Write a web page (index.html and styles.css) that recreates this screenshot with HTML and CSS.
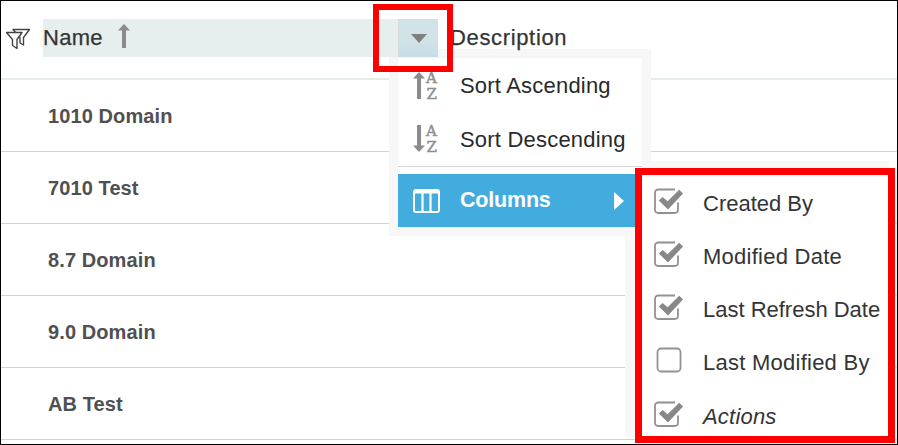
FILE: index.html
```
<!DOCTYPE html>
<html lang="en">
<head>
<meta charset="utf-8">
<title>Domains</title>
<link rel="stylesheet" href="styles.css">
</head>
<body>
<svg class="defs" aria-hidden="true">
  <symbol id="checked" viewBox="0 0 30 26">
    <path d="M22 1.500H5.500Q2 1.500 2 5V21.500Q2 25 5.500 25H21.500Q25 25 25 21.500V14.500" fill="none" stroke="#929295" stroke-width="1.800"/>
    <path d="M5.800 12.500L9.600 9L14.600 13.300L26.200 1.800L30 5.500L15 21.500Z" fill="#88888b"/>
  </symbol>
</svg>
<main class="frame">
  <div class="grid">
    <header class="head">
      <svg class="funnel" viewBox="0 0 26 23" width="26" height="23" fill="#fff" stroke="#444" stroke-width="1.400" stroke-linejoin="round">
        <path d="M8 1.500H24.500L18.500 9.500V17L15 15V9.500Z"/>
        <path d="M1.500 4.500H17L12 11.500V20.500L7.500 17.500V11.500Z"/>
      </svg>
      <div class="name"><span>Name</span>
        <svg viewBox="0 0 12 25" width="12" height="25"><path d="M6 0L12 6.500H8V24H4V6.500H0Z" fill="#8b8b8b"/></svg>
      </div>
      <div class="trigger"><svg viewBox="0 0 16 9" width="16" height="9"><path d="M0 0H16L8 9Z" fill="#7f7f80"/></svg></div>
      <div class="description">Description</div>
    </header>
    <div class="row">1010 Domain</div>
    <div class="row">7010 Test</div>
    <div class="row">8.7 Domain</div>
    <div class="row">9.0 Domain</div>
    <div class="row">AB Test</div>
  </div>
  <div class="shade"></div>
  <nav class="menu">
    <div class="item">
      <svg class="sort" viewBox="0 0 26 30" width="26" height="30"><path d="M6 1L12 7.500H8V28H4V7.500H0Z" fill="#8b8b8d"/><text x="13" y="12">A</text><text x="13.500" y="28">Z</text></svg>
      <span>Sort Ascending</span>
    </div>
    <div class="item desc">
      <svg class="sort" viewBox="0 0 26 30" width="26" height="30"><path d="M4 1H8V21.500H12L6 28L0 21.500H4Z" fill="#8b8b8d"/><text x="13" y="12">A</text><text x="13.500" y="28">Z</text></svg>
      <span>Sort Descending</span>
    </div>
    <div class="item active">
      <svg class="cols" viewBox="0 0 27 24" width="27" height="24" fill="none" stroke="#fff"><rect x="1" y="1" width="25" height="22" rx="2" stroke-width="2"/><path d="M1 3H26" stroke-width="3"/><path d="M9.500 3V23M17.500 3V23" stroke-width="2.200"/></svg>
      <span>Columns</span>
      <svg class="arrow" viewBox="0 0 10 18" width="10" height="18"><path d="M0 0L10 9L0 18Z" fill="#fff"/></svg>
    </div>
  </nav>
  <section class="submenu">
    <div class="option"><svg><use href="#checked"/></svg><span>Created By</span></div>
    <div class="option wide"><svg><use href="#checked"/></svg><span>Modified Date</span></div>
    <div class="option"><svg><use href="#checked"/></svg><span>Last Refresh Date</span></div>
    <div class="option wide"><svg viewBox="0 0 30 26"><rect x="4.500" y="1.500" width="23" height="23" rx="3.500" fill="none" stroke="#929295" stroke-width="1.800"/></svg><span>Last Modified By</span></div>
    <div class="option actions"><svg><use href="#checked"/></svg><span>Actions</span></div>
  </section>
  <div class="callout"></div>
</main>
</body>
</html>
```
FILE: styles.css
```
* { box-sizing: border-box; }
body { margin: 0; font-family: "Liberation Sans", Arial, sans-serif; background: #fff; }
.defs { position: absolute; width: 0; height: 0; }
.frame { position: relative; width: 898px; height: 445px; border: 1px solid #000; overflow: hidden; }
.head { display: flex; height: 79px; padding: 18px 0 0 4px; border-bottom: 2px solid #e5eded; font-size: 22px; line-height: 37px; color: #343436; -webkit-text-stroke: .25px #343436; }
.funnel { margin-top: 9px; flex: none; }
.name { position: relative; z-index: 1; display: flex; width: 355px; height: 38px; margin-left: 12px; background: #e6efed; }
.name span { width: 75px; letter-spacing: .3px; }
.name svg { margin-top: 5px; }
.trigger { position: relative; z-index: 1; display: flex; align-items: center; justify-content: center; width: 40px; height: 38px; background: linear-gradient(#d1e3e6 60%, #c6dce8); border-left: 1px solid #d9d9dd; }
.description { position: relative; z-index: 1; margin-left: 12px; letter-spacing: .65px; }
.row { height: 72px; padding-left: 47px; border-bottom: 1px solid #d1d1d4; font-size: 20px; font-weight: bold; line-height: 73px; letter-spacing: .1px; color: #505052; }
.shade { position: absolute; left: 624px; top: 160px; width: 264px; height: 276px; background: #f7f7f8; }
.menu { position: absolute; left: 397px; top: 57px; width: 244px; height: 169px; background: #fff; box-shadow: 0 0 0 1px #f4f3f5, 0 0 0 9px #f7f7f8; }
.item { display: flex; align-items: center; height: 56px; padding-left: 15px; font-size: 22px; color: #29292b; letter-spacing: .2px; }
.item svg { flex: none; overflow: visible; }
.item span { margin-left: 21px; }
.desc { height: 53px; border-bottom: 1px solid #d5d5d8; }
.desc .sort { margin-top: -2px; }
.sort text { font: bold 17px "DejaVu Serif", serif; font-size: 15px; font-weight: normal; letter-spacing: 0; fill: #909092; stroke: #909092; stroke-width: .5px; }
.active { height: 53px; margin-top: 7px; background: #42acdf; color: #fff; font-size: 21.500px; font-weight: bold; letter-spacing: -.2px; }
.active span { width: 91px; margin-left: 20px; }
.active .arrow { margin-left: 63px; }
.submenu { position: absolute; left: 634px; top: 167px; width: 260px; height: 275px; padding: 2px 0 0 11px; border: 7px solid #fe0000; background: #fff; }
.option { display: flex; align-items: center; height: 53px; color: #343436; font-size: 22px; letter-spacing: -.01px; }
.option svg { width: 30px; height: 26px; margin-top: -6px; }
.option span { margin-left: 20px; }
.wide { letter-spacing: .25px; }
.actions { padding-top: 2px; letter-spacing: .2px; }
.actions span { font-style: italic; }
.callout { position: absolute; z-index: 2; left: 372px; top: 3px; width: 80px; height: 68px; border: 6px solid #fe0000; }
```
